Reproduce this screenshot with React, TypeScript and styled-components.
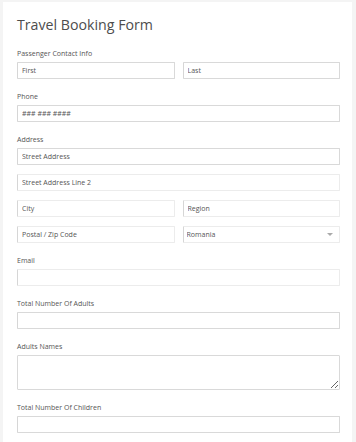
import React from 'react';
import styled, { createGlobalStyle } from 'styled-components';

const GlobalStyle = createGlobalStyle`
  html, body {
    margin: 0;
    padding: 0;
    background: #f4f4f4;
  }
  body {
    font-family: 'Open Sans', 'Liberation Sans', sans-serif;
    color: #555;
  }
`;

const Page = styled.div`
  padding: 2px 4px 0 3px;
  height: 440px;
  overflow: hidden;
`;

const Card = styled.form`
  background: #fff;
  padding: 14px 12px 20px 14px;
  min-height: 440px;
  box-sizing: border-box;
`;

const Title = styled.h1`
  margin: 0 0 15px;
  font-size: 14.2px;
  line-height: 18px;
  font-weight: 400;
  color: #4d4d4d;
`;

const Field = styled.div`
  display: flex;
  flex-direction: column;
  margin-bottom: 13px;
`;

const Label = styled.label`
  font-size: 7px;
  line-height: 10px;
  color: #555;
  margin-bottom: 3px;
`;

const Row = styled.div`
  display: grid;
  grid-template-columns: 1fr 1fr;
  column-gap: 8px;
  row-gap: 9px;
`;

const Stack = styled.div`
  display: flex;
  flex-direction: column;
  gap: 9px;
`;

const Input = styled.input<{ $soft?: boolean }>`
  display: block;
  box-sizing: border-box;
  width: 100%;
  height: 17px;
  padding: 0 4px;
  margin: 0;
  font-family: inherit;
  font-size: 7px;
  color: #555;
  background: #fff;
  border: 1px solid ${(p) => (p.$soft ? '#ececec' : '#d9d9d9')};
  border-left-color: #d6d6d6;
  border-radius: 1px;
  outline: none;
  &::placeholder {
    color: #555;
    opacity: 1;
  }
`;

const TextArea = styled.textarea`
  box-sizing: border-box;
  width: 100%;
  height: 35px;
  padding: 3px 4px;
  margin: 0;
  font-family: inherit;
  font-size: 7px;
  border: 1px solid #d9d9d9;
  border-radius: 1px;
  outline: none;
  resize: vertical;
  display: block;
`;

const SelectWrap = styled.div`
  position: relative;
  height: 17px;
`;

const Select = styled.select`
  display: block;
  box-sizing: border-box;
  width: 100%;
  height: 17px;
  padding: 0 3px;
  margin: 0;
  font-family: inherit;
  font-size: 7px;
  color: #555;
  background: #fff;
  border: 1px solid #ececec;
  border-left-color: #d6d6d6;
  border-radius: 1px;
  appearance: none;
  outline: none;
`;

const Arrow = styled.span`
  position: absolute;
  right: 7px;
  top: 7px;
  width: 0;
  height: 0;
  border-left: 3px solid transparent;
  border-right: 3px solid transparent;
  border-top: 3px solid #aaa;
  pointer-events: none;
`;

export default function App() {
  return (
    <>
      <GlobalStyle />
      <Page>
        <Card>
          <Title>Travel Booking Form</Title>

          <Field>
            <Label>Passenger Contact Info</Label>
            <Row>
              <Input placeholder="First" />
              <Input placeholder="Last" />
            </Row>
          </Field>

          <Field>
            <Label>Phone</Label>
            <Input placeholder="### ### ####" />
          </Field>

          <Field>
            <Label>Address</Label>
            <Stack>
              <Input placeholder="Street Address" />
              <Input $soft placeholder="Street Address Line 2" />
              <Row>
                <Input $soft placeholder="City" />
                <Input $soft placeholder="Region" />
                <Input $soft placeholder="Postal / Zip Code" />
                <SelectWrap>
                  <Select defaultValue="Romania">
                    <option>Romania</option>
                  </Select>
                  <Arrow />
                </SelectWrap>
              </Row>
            </Stack>
          </Field>

          <Field>
            <Label>Email</Label>
            <Input $soft />
          </Field>

          <Field>
            <Label>Total Number Of Adults</Label>
            <Input />
          </Field>

          <Field>
            <Label>Adults Names</Label>
            <TextArea />
          </Field>

          <Field>
            <Label>Total Number Of Children</Label>
            <Input />
          </Field>
        </Card>
      </Page>
    </>
  );
}
